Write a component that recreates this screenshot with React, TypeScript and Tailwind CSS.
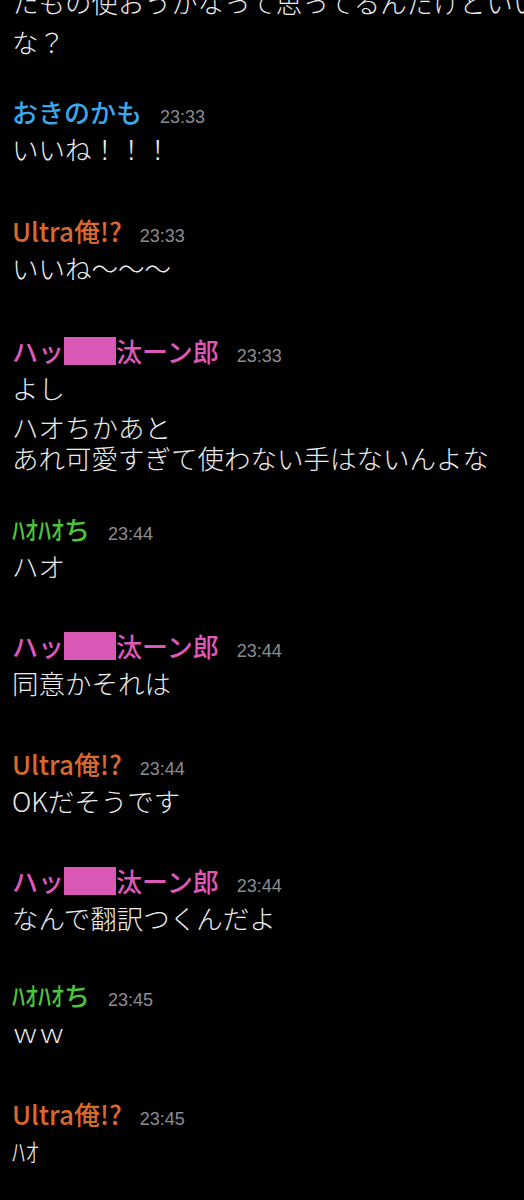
const nameColors: Record<string, string> = {
  blue: "text-[#3ea6ea]",
  orange: "text-[#d8692e]",
  pink: "text-[#df58b8]",
  green: "text-[#4ec33c]",
};

interface Group {
  name: "okinokamo" | "ultra" | "hat" | "haohao";
  time: string;
  space: string;
  messages: string[];
}

const groups: Group[] = [
  { name: "okinokamo", time: "23:33", space: "mt-[29px]", messages: ["いいね！！！"] },
  { name: "ultra", time: "23:33", space: "mt-[46px]", messages: ["いいね〜〜〜"] },
  {
    name: "hat",
    time: "23:33",
    space: "mt-[47px]",
    messages: ["よし", "ハオちかあと\nあれ可愛すぎて使わない手はないんよな"],
  },
  { name: "haohao", time: "23:44", space: "mt-[35px]", messages: ["ハオ"] },
  { name: "hat", time: "23:44", space: "mt-[44px]", messages: ["同意かそれは"] },
  { name: "ultra", time: "23:44", space: "mt-[45px]", messages: ["OKだそうです"] },
  { name: "hat", time: "23:44", space: "mt-[44px]", messages: ["なんで翻訳つくんだよ"] },
  { name: "haohao", time: "23:45", space: "mt-[41px]", messages: ["ｗｗ"] },
  { name: "ultra", time: "23:45", space: "mt-[46px]", messages: ["ﾊｵ"] },
];

function Name({ who }: { who: Group["name"] }) {
  switch (who) {
    case "okinokamo":
      return <span className={nameColors.blue}>おきのかも</span>;
    case "ultra":
      return <span className={nameColors.orange}>Ultra俺!?</span>;
    case "haohao":
      return <span className={nameColors.green}>ﾊｵﾊｵち</span>;
    case "hat":
      return (
        <span className={`flex items-center ${nameColors.pink}`}>
          ハッ
          {/* redacted part of the name */}
          <span className="inline-block w-[52px] h-[28px] bg-[#d957b5]" />
          汰ーン郎
        </span>
      );
    default:
      return null;
  }
}

export default function App() {
  return (
    <div className="w-[524px] h-[1200px] overflow-hidden bg-black pl-[12px] font-['Noto_Sans_CJK_JP',sans-serif] text-[#ececec]">

      {/* message cut off at the top */}
      <div className="-mt-[18px] text-[26.5px] leading-[40px] font-light">
        <p className="whitespace-nowrap">たもの使おうかなって思ってるんだけどいい</p>
        <p>な？</p>
      </div>

      {groups.map((group, index) => (
        <div key={index} className={group.space}>

          {/* NAME ROW */}
          <div className="flex items-baseline h-[42px] leading-[42px]">
            <div className="text-[26px] font-medium">
              <Name who={group.name} />
            </div>
            <span className="ml-[18px] text-[18px] text-[#8b8d92] font-['Liberation_Sans',sans-serif]">
              {group.time}
            </span>
          </div>

          {/* MESSAGES */}
          <div className="flex flex-col gap-[8px]">
            {group.messages.map((msg, i) => (
              <p key={i} className="text-[26.5px] leading-[31px] font-light whitespace-pre-line">
                {msg}
              </p>
            ))}
          </div>
        </div>
      ))}
    </div>
  );
}
